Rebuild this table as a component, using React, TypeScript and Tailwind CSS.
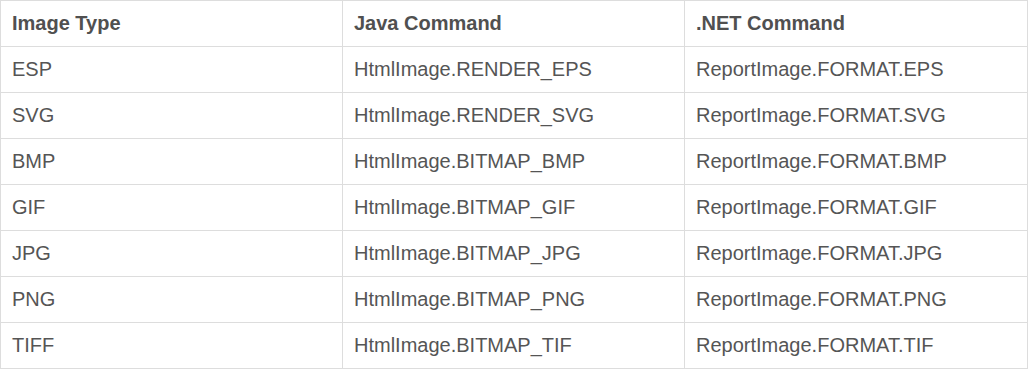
const rows: [string, string, string][] = [
  ["ESP", "HtmlImage.RENDER_EPS", "ReportImage.FORMAT.EPS"],
  ["SVG", "HtmlImage.RENDER_SVG", "ReportImage.FORMAT.SVG"],
  ["BMP", "HtmlImage.BITMAP_BMP", "ReportImage.FORMAT.BMP"],
  ["GIF", "HtmlImage.BITMAP_GIF", "ReportImage.FORMAT.GIF"],
  ["JPG", "HtmlImage.BITMAP_JPG", "ReportImage.FORMAT.JPG"],
  ["PNG", "HtmlImage.BITMAP_PNG", "ReportImage.FORMAT.PNG"],
  ["TIFF", "HtmlImage.BITMAP_TIF", "ReportImage.FORMAT.TIF"],
];

export default function App() {
  return (
    <div className="bg-white w-[1028px] h-[369px] font-['Liberation_Sans',Arial,sans-serif]">
      <table className="w-[1028px] border-collapse table-fixed text-[20px] leading-[21px] text-[#555]">
        <thead>
          <tr className="h-[46px]">
            <th className="w-[342px] border border-[#ddd] pl-[11px] pr-3 text-left font-bold text-[#505050]">Image Type</th>
            <th className="w-[342px] border border-[#ddd] pl-[11px] pr-3 text-left font-bold text-[#505050]">Java Command</th>
            <th className="border border-[#ddd] pl-[11px] pr-3 text-left font-bold text-[#505050]">.NET Command</th>
          </tr>
        </thead>
        <tbody>
          {rows.map(([type, java, net]) => (
            <tr key={type} className="h-[46px]">
              <td className="border border-[#ddd] pl-[11px] pr-3">{type}</td>
              <td className="border border-[#ddd] pl-[11px] pr-3">{java}</td>
              <td className="border border-[#ddd] pl-[11px] pr-3">{net}</td>
            </tr>
          ))}
        </tbody>
      </table>
    </div>
  );
}
